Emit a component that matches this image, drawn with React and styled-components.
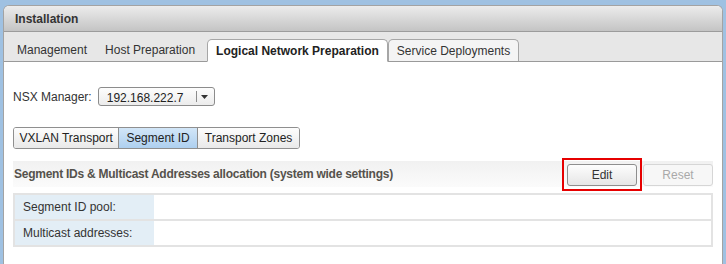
import React from "react";
import styled, { createGlobalStyle } from "styled-components";

const Global = createGlobalStyle`
  html, body { margin: 0; padding: 0; }
  body {
    background: #9fc1e2;
    font-family: "Liberation Sans", Arial, sans-serif;
    font-size: 12px;
    color: #333;
    overflow: hidden;
  }
`;

const Panel = styled.div`
  margin: 5px 3px 0 3px;
  width: 720px;
  height: 259px;
  background: #fff;
  border-radius: 6px 6px 0 0;
  box-sizing: border-box;
  border: 1px solid #a3a3a3;
  border-bottom: none;
  overflow: hidden;
  font-family: "Liberation Sans", Arial, sans-serif;
`;

const Header = styled.div`
  height: 25px;
  display: flex;
  align-items: center;
  padding-left: 11px;
  background: linear-gradient(#ececec, #c4c4c4);
  border-bottom: 1px solid #9c9c9c;
  font-weight: bold;
  font-size: 12px;
  color: #333;
`;

const TabBar = styled.div`
  height: 29px;
  display: flex;
  align-items: flex-end;
  padding-left: 4px;
  background: #e7e7e7;
  border-bottom: 1px solid #9a9a9a;
`;

const Tab = styled.div`
  height: ${(p) => (p.$active ? "23px" : "22px")};
  margin-bottom: ${(p) => (p.$active ? "-1px" : "0")};
  margin-left: ${(p) => (p.$active ? "3px" : "0")};
  display: flex;
  align-items: center;
  padding: 0 8px;
  box-sizing: border-box;
  font-size: 12px;
  font-weight: ${(p) => (p.$active ? "bold" : "normal")};
  color: ${(p) => (p.$active ? "#222" : "#333")};
  background: ${(p) => (p.$active ? "#fff" : p.$framed ? "#f4f4f4" : "transparent")};
  border: 1px solid ${(p) => (p.$active || p.$framed ? "#a6a6a6" : "transparent")};
  border-bottom: ${(p) => (p.$active ? "1px solid #fff" : p.$framed ? "none" : "1px solid transparent")};
  border-radius: 5px 5px 0 0;
`;

const Content = styled.div`
  padding: 0 9px;
`;

const ManagerRow = styled.div`
  margin-top: 25px;
  display: flex;
  align-items: center;
  gap: 6px;
  font-size: 12px;
  color: #333;
`;

const Select = styled.div`
  width: 117px;
  height: 19px;
  box-sizing: border-box;
  border: 1px solid #8c8c8c;
  border-radius: 3px;
  background: linear-gradient(#fdfdfd, #ececec);
  display: flex;
  align-items: stretch;
`;

const SelectValue = styled.div`
  flex: 1;
  display: flex;
  align-items: center;
  padding-left: 8px;
  padding-top: 2px;
  font-size: 12px;
  color: #222;
`;

const SelectArrow = styled.div`
  width: 18px;
  display: flex;
  align-items: center;
  justify-content: center;
  position: relative;
  &::before {
    content: "";
    position: absolute;
    left: 0;
    top: 3px;
    bottom: 3px;
    border-left: 1px solid #8c8c8c;
  }
`;

const SegGroup = styled.div`
  margin-top: 21px;
  display: inline-flex;
  height: 20px;
  border: 1px solid #8f8f8f;
  border-radius: 3px;
  overflow: hidden;
`;

const SegButton = styled.div`
  display: flex;
  align-items: center;
  padding: 0 ${(p) => p.$pad}px;
  font-size: 12px;
  color: #222;
  background: ${(p) => (p.$active ? "linear-gradient(#d2e6f8, #aed0f0)" : "linear-gradient(#fdfdfd, #e9e9e9)")};
  & + & { border-left: 1px solid #8f8f8f; }
`;

const SectionBar = styled.div`
  margin-top: 12px;
  height: 26px;
  display: flex;
  align-items: center;
  padding-left: 1px;
  background: linear-gradient(#f1f1f1, #fbfbfb);
`;

const SectionTitle = styled.div`
  flex: 1;
  font-weight: bold;
  font-size: 12px;
  letter-spacing: -0.25px;
  color: #55524c;
`;

const Highlight = styled.div`
  align-self: flex-start;
  border: 2px solid #e60000;
  padding: 4px 3px 3px 3px;
  margin-right: 1px;
  margin-top: -3px;
  display: flex;
`;

const Button = styled.div`
  width: 70px;
  height: 22px;
  box-sizing: border-box;
  display: flex;
  align-items: center;
  justify-content: center;
  font-size: 12px;
  border-radius: 3px;
  border: 1px solid ${(p) => (p.$disabled ? "#d6d6d6" : "#8e8e8e")};
  color: ${(p) => (p.$disabled ? "#a9a9a9" : "#333")};
  background: ${(p) => (p.$disabled ? "#f7f7f7" : "linear-gradient(#fdfdfd, #e6e6e6)")};
  align-self: ${(p) => (p.$disabled ? "flex-start" : "auto")};
  margin-top: ${(p) => (p.$disabled ? "3px" : "0")};
`;

const Table = styled.div`
  margin-top: 6px;
  width: 700px;
  box-sizing: border-box;
  border: 2px solid #e3e3e3;
  display: grid;
  grid-template-columns: 139px 1fr;
`;

const LabelCell = styled.div`
  height: 24px;
  display: flex;
  align-items: center;
  padding-left: 8px;
  background: #e3eef6;
  font-size: 12px;
  color: #333;
  border-top: ${(p) => (p.$first ? "none" : "2px solid #e3e3e3")};
`;

const ValueCell = styled.div`
  height: 24px;
  background: #fff;
  border-top: ${(p) => (p.$first ? "none" : "2px solid #e3e3e3")};
`;

export default function App() {
  const rows = ["Segment ID pool:", "Multicast addresses:"];
  return (
    <>
      <Global />
      <Panel>
        <Header>Installation</Header>
        <TabBar>
          <Tab>Management</Tab>
          <Tab>Host Preparation</Tab>
          <Tab $active>Logical Network Preparation</Tab>
          <Tab $framed>Service Deployments</Tab>
        </TabBar>
        <Content>
          <ManagerRow>
            NSX Manager:
            <Select>
              <SelectValue>192.168.222.7</SelectValue>
              <SelectArrow>
                <svg width="7" height="4" viewBox="0 0 7 4">
                  <path d="M0 0H7L3.5 4Z" fill="#333" />
                </svg>
              </SelectArrow>
            </Select>
          </ManagerRow>
          <SegGroup>
            <SegButton $pad={5.5}>VXLAN Transport</SegButton>
            <SegButton $pad={7} $active>Segment ID</SegButton>
            <SegButton $pad={7}>Transport Zones</SegButton>
          </SegGroup>
          <SectionBar>
            <SectionTitle>Segment IDs &amp; Multicast Addresses allocation (system wide settings)</SectionTitle>
            <Highlight>
              <Button>Edit</Button>
            </Highlight>
            <Button $disabled>Reset</Button>
          </SectionBar>
          <Table>
            {rows.map((r, i) => (
              <React.Fragment key={r}>
                <LabelCell $first={i === 0}>{r}</LabelCell>
                <ValueCell $first={i === 0} />
              </React.Fragment>
            ))}
          </Table>
        </Content>
      </Panel>
    </>
  );
}
